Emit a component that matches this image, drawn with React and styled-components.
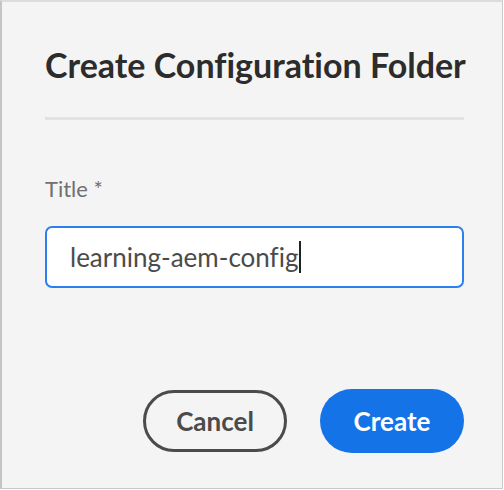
import styled, { createGlobalStyle } from "styled-components";

const Global = createGlobalStyle`
  html, body {
    margin: 0;
    padding: 0;
    background: #ffffff;
  }
  * { box-sizing: border-box; }
`;

// dialog: create config folder
const App = () => {
  return (
    <>
      <Global />
      <Dialog>
        <Heading>Create Configuration Folder</Heading>
        <Divider />
        <Field>
          <Label>Title *</Label>
          <InputBox>
            learning-aem-config<Caret />
          </InputBox>
        </Field>
        <Footer>
          <Button variant="secondary">Cancel</Button>
          <Button variant="cta">Create</Button>
        </Footer>
      </Dialog>
    </>
  );
};

const Dialog = styled.div`
  width: 503px;
  height: 489px;
  background: #f4f4f4;
  border: 1px solid #c9c9c9;
  border-top: 2px solid #dcdcdc;
  border-left: 2px solid #c4c4c4;
  padding: 41px 38px 0 43px;
  display: flex;
  flex-direction: column;
  font-family: Lato, "Open Sans", sans-serif;
  font-variant-ligatures: none;
`;

const Heading = styled.h1`
  margin: 0;
  font-size: 34px;
  font-weight: 700;
  line-height: 44px;
  color: #2c2c2c;
  white-space: nowrap;
`;

const Divider = styled.div`
  height: 3px;
  margin-top: 30px;
  background: #e2e2e2;
`;

const Field = styled.div`
  margin-top: 56px;
  display: flex;
  flex-direction: column;
`;

const Label = styled.div`
  font-size: 22px;
  line-height: 26px;
  color: #707070;
`;

const InputBox = styled.div`
  margin-top: 24px;
  height: 62px;
  border: 2px solid #2b7fef;
  border-radius: 7px;
  background: #ffffff;
  padding: 0 23px;
  display: flex;
  align-items: center;
  font-size: 26px;
  color: #4b4b4b;
`;

const Caret = styled.span`
  display: inline-block;
  width: 2px;
  height: 32px;
  background: #222;
  margin-left: 1px;
`;

const Footer = styled.div`
  margin-top: auto;
  margin-bottom: 35px;
  display: flex;
  justify-content: flex-end;
  align-items: center;
  gap: 33px;
`;

const Button = styled.button`
  height: ${(props) => props.variant === "cta" ? "64px" : "62px"};
  min-width: 144px;
  padding: 0 30px;
  border-radius: 32px;
  font-family: Lato, "Open Sans", sans-serif;
  font-size: 26px;
  font-weight: 700;
  cursor: pointer;
  border: ${(props) => props.variant === "cta" ? "none" : "3px solid #4b4b4b"};
  background: ${(props) => props.variant === "cta" ? "#1473e6" : "transparent"};
  color: ${(props) => props.variant === "cta" ? "#ffffff" : "#4b4b4b"};
`;

export default App;
